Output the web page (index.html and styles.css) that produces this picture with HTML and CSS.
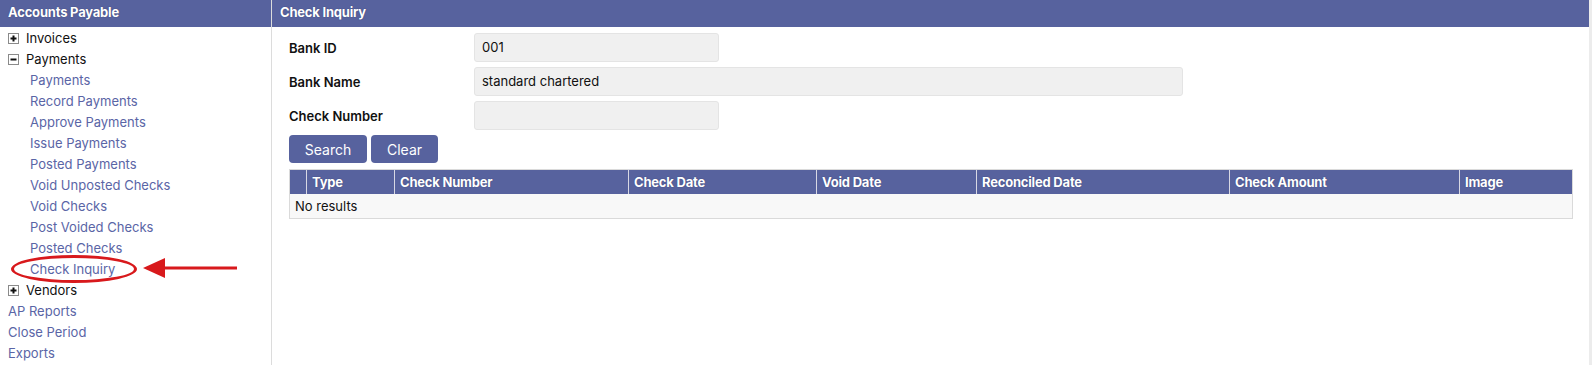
FILE: index.html
```html
<!DOCTYPE html>
<html lang="en">
<head>
    <meta charset="UTF-8">
    <title>Check Inquiry</title>
    <link rel="stylesheet" href="styles.css">
</head>
<body>

    <div class="layout">
        <div class="sidebar">
            <div class="panel-title">Accounts Payable</div>
            <ul class="menu">
                <li class="group">
                    <svg class="toggle" width="11" height="11" viewBox="0 0 11 11"><rect x="0.5" y="0.5" width="10" height="10" fill="#fff" stroke="#8a8a8a"/><path d="M2.5 5.5 H8.5 M5.5 2.5 V8.5" stroke="#111" stroke-width="2"/></svg>
                    Invoices
                </li>
                <li class="group">
                    <svg class="toggle" width="11" height="11" viewBox="0 0 11 11"><rect x="0.5" y="0.5" width="10" height="10" fill="#fff" stroke="#8a8a8a"/><path d="M2.5 5.5 H8.5" stroke="#111" stroke-width="2"/></svg>
                    Payments
                </li>
                <li class="sub"><a href="#">Payments</a></li>
                <li class="sub"><a href="#">Record Payments</a></li>
                <li class="sub"><a href="#">Approve Payments</a></li>
                <li class="sub"><a href="#">Issue Payments</a></li>
                <li class="sub"><a href="#">Posted Payments</a></li>
                <li class="sub"><a href="#">Void Unposted Checks</a></li>
                <li class="sub"><a href="#">Void Checks</a></li>
                <li class="sub"><a href="#">Post Voided Checks</a></li>
                <li class="sub"><a href="#">Posted Checks</a></li>
                <li class="sub current">
                    <a href="#">Check Inquiry</a>
                    <span class="circle"></span>
                    <svg class="arrow" width="96" height="22" viewBox="0 0 96 22">
                        <path d="M20 11 H94" stroke="#d8191c" stroke-width="3"/>
                        <path d="M0 11 L22 1 L22 21 Z" fill="#d8191c"/>
                    </svg>
                </li>
                <li class="group">
                    <svg class="toggle" width="11" height="11" viewBox="0 0 11 11"><rect x="0.5" y="0.5" width="10" height="10" fill="#fff" stroke="#8a8a8a"/><path d="M2.5 5.5 H8.5 M5.5 2.5 V8.5" stroke="#111" stroke-width="2"/></svg>
                    Vendors
                </li>
                <li class="top"><a href="#">AP Reports</a></li>
                <li class="top"><a href="#">Close Period</a></li>
                <li class="top"><a href="#">Exports</a></li>
            </ul>
        </div>

        <div class="main">
            <div class="panel-title">Check Inquiry</div>
            <div class="content">
                <div class="form-row">
                    <label>Bank ID</label>
                    <div class="field short">001</div>
                </div>
                <div class="form-row">
                    <label>Bank Name</label>
                    <div class="field long">standard chartered</div>
                </div>
                <div class="form-row">
                    <label>Check Number</label>
                    <div class="field short"></div>
                </div>

                <div class="buttons">
                    <button class="btn search">Search</button>
                    <button class="btn clear">Clear</button>
                </div>

                <table class="results">
                    <thead>
                        <tr>
                            <th class="c0"></th>
                            <th class="c1">Type</th>
                            <th class="c2">Check Number</th>
                            <th class="c3">Check Date</th>
                            <th class="c4">Void Date</th>
                            <th class="c5">Reconciled Date</th>
                            <th class="c6">Check Amount</th>
                            <th class="c7">Image</th>
                        </tr>
                    </thead>
                    <tbody>
                        <tr>
                            <td colspan="8">No results</td>
                        </tr>
                    </tbody>
                </table>
            </div>
        </div>
    </div>

</body>
</html>
```

FILE: styles.css
```css
/* Page frame */
body {
    font-family: Inter, "Open Sans", sans-serif;
    font-size: 13px;
    color: #111;
    background-color: #fff;
    margin: 0;
}

.layout {
    display: flex;
    height: 365px;
    border-right: 3px solid #ececec;
}

.panel-title {
    background-color: #57629e;
    color: #fff;
    font-weight: 700;
    font-size: 13px;
    height: 27px;
    line-height: 25px;
    padding-left: 8px;
    letter-spacing: -0.2px;
    text-shadow: 0 0 1px #2c3366;
}

/* Left navigation */
.sidebar {
    width: 271px;
    flex: none;
    border-right: 1px solid #dcdcdc;
}

.menu {
    list-style: none;
    margin: 0;
    padding: 1px 0 0 0;
}

.menu li {
    height: 21px;
    line-height: 21px;
    white-space: nowrap;
}

.menu a {
    color: #5a65a6;
    text-decoration: none;
}

.group {
    display: flex;
    align-items: center;
    padding-left: 8px;
    color: #111;
}

.toggle {
    margin-right: 7px;
    flex: none;
}

.sub {
    padding-left: 30px;
}

.top {
    padding-left: 8px;
}

.current {
    position: relative;
}

.circle {
    position: absolute;
    left: 11px;
    top: -4px;
    width: 120px;
    height: 22px;
    border: 3px solid #d8191c;
    border-radius: 50%;
}

.arrow {
    position: absolute;
    left: 143px;
    top: -2px;
}

/* Main panel */
.main {
    flex: 1;
}

.content {
    padding: 6px 16px 0 17px;
}

.form-row {
    display: flex;
    align-items: center;
    margin-bottom: 5px;
}

.form-row label {
    width: 185px;
    font-weight: 600;
}

.field {
    height: 29px;
    box-sizing: border-box;
    background-color: #f0f0f0;
    border: 1px solid #e4e4e4;
    border-radius: 3px;
    padding: 3px 7px 0;
    line-height: 20px;
}

.field.short {
    width: 245px;
}

.field.long {
    width: 709px;
}

.buttons {
    display: flex;
    gap: 4px;
    margin-bottom: 6px;
}

.btn {
    height: 28px;
    background-color: #57629e;
    color: #fff;
    border: none;
    border-radius: 4px;
    font-family: inherit;
    font-size: 14px;
    padding: 0;
}

.btn.search {
    width: 78px;
}

.btn.clear {
    width: 67px;
}

/* Results table */
.results {
    width: 1283px;
    border-collapse: collapse;
    table-layout: fixed;
    border: 1px solid #dadada;
}

.results th {
    box-sizing: border-box;
    background-color: #57629e;
    color: #fff;
    font-weight: 700;
    text-align: left;
    height: 24px;
    padding: 0 5px;
    border-left: 1px solid #d8d8e4;
    letter-spacing: -0.2px;
    text-shadow: 0 0 1px #2c3366;
}

.results th:first-child {
    border-left: none;
}

.results td {
    background-color: #f8f8f8;
    height: 24px;
    padding: 0 5px;
}

.c0 { width: 17px; }
.c1 { width: 88px; }
.c2 { width: 234px; }
.c3 { width: 188px; }
.c4 { width: 160px; }
.c5 { width: 253px; }
.c6 { width: 230px; }
.c7 { width: 113px; }
```
